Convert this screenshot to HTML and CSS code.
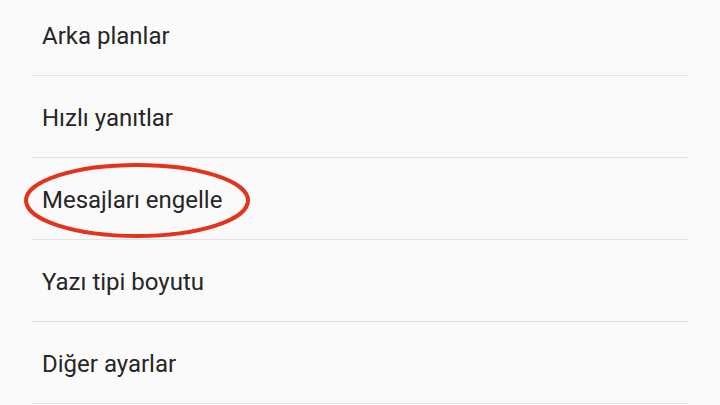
FILE: index.html
```html
<!DOCTYPE html>
<html lang="tr">
<head>
<meta charset="utf-8">
<link rel="stylesheet" href="styles.css">
</head>
<body>
<div class="screen">
  <ul class="list">
    <li class="row"><span class="label">Arka planlar</span></li>
    <li class="row"><span class="label">Hızlı yanıtlar</span></li>
    <li class="row"><span class="label">Mesajları engelle</span></li>
    <li class="row"><span class="label">Yazı tipi boyutu</span></li>
    <li class="row"><span class="label">Diğer ayarlar</span></li>
  </ul>
  <svg class="circle" width="720" height="405" viewBox="0 0 720 405">
    <ellipse cx="137" cy="200.5" rx="111" ry="35.5" fill="none" stroke="#e4321b" stroke-width="4"/>
  </svg>
</div>
</body>
</html>
```

FILE: styles.css
```css
html, body {
  margin: 0;
  padding: 0;
  background: #fafafa;
}
.screen {
  position: relative;
  width: 720px;
  height: 405px;
  overflow: hidden;
  background: #fafafa;
}
.list {
  list-style: none;
  margin: -6px 32px 0 32px;
  padding: 0;
}
.row {
  height: 79px;
  padding-top: 2px;
  padding-left: 10px;
  border-bottom: 1px solid #e2e2e2;
  display: flex;
  align-items: center;
  box-sizing: content-box;
}
.label {
  font-family: Roboto, "Noto Sans", sans-serif;
  font-size: 24px;
  line-height: 28px;
  color: #262626;
}
.circle {
  position: absolute;
  left: 0;
  top: 0;
  pointer-events: none;
}
```
